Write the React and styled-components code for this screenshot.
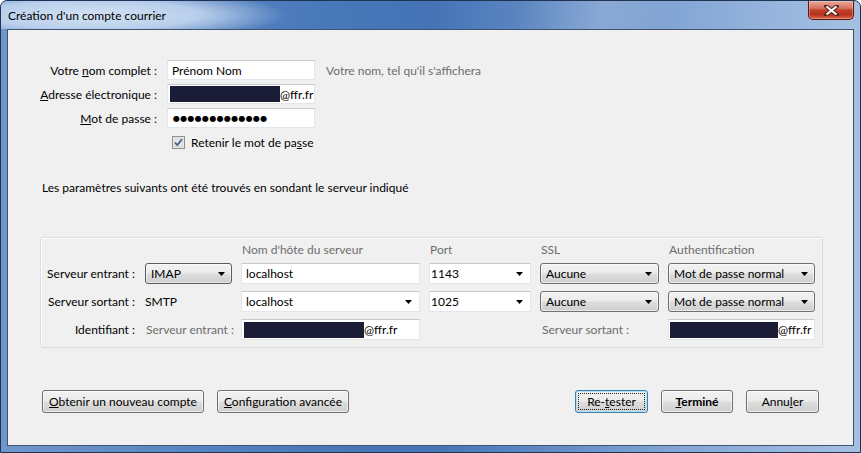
import React from 'react';
import styled, { createGlobalStyle } from 'styled-components';

const GlobalStyle = createGlobalStyle`
  html, body {
    margin: 0;
    padding: 0;
    background: #ffffff;
  }
  body {
    font-family: "Segoe UI", Lato, "Noto Sans", sans-serif;
    font-size: 12px;
    color: #000000;
  }
`;

const Window = styled.div`
  width: 861px;
  height: 453px;
  box-sizing: border-box;
  border: 1px solid #1f3352;
  border-radius: 7px 7px 0 0;
  background: linear-gradient(90deg, #6f97cb 0%, #4b7abb 35%, #4473b6 50%, #86a8d6 80%, #a6c0e3 100%);
  display: flex;
  flex-direction: column;
  overflow: hidden;
`;

const TitleBar = styled.div`
  height: 28px;
  flex: none;
  display: flex;
  justify-content: space-between;
  align-items: flex-start;
  padding: 0 6px 0 7px;
  background:
    radial-gradient(ellipse 190px 26px at 95px 14px, rgba(214, 228, 245, 0.98) 0%, rgba(200, 218, 242, 0.85) 55%, rgba(200, 218, 242, 0) 100%),
    linear-gradient(100deg, rgba(255, 255, 255, 0) 60%, rgba(255, 255, 255, 0.18) 70%, rgba(255, 255, 255, 0) 78%);
`;

const Title = styled.span`
  line-height: 29px;
  color: #000;
`;

const CloseButton = styled.div`
  width: 46px;
  height: 19px;
  box-sizing: border-box;
  border: 1px solid #5a1a10;
  border-top: none;
  border-radius: 0 0 5px 5px;
  background: linear-gradient(#e9a99c 0%, #d7735f 40%, #c1402a 50%, #b8301c 75%, #d8694c 100%);
  box-shadow: inset 0 0 0 1px rgba(255, 220, 210, 0.35);
  display: flex;
  align-items: center;
  justify-content: center;
`;

const Frame = styled.div`
  flex: 1;
  display: flex;
  padding: 0 6px 6px;
`;

const Content = styled.div`
  flex: 1;
  min-width: 0;
  border: 1px solid #3d536f;
  background: #f0f0f0;
  padding: 30px 34px 0 32px;
  display: flex;
  flex-direction: column;
`;

const TopForm = styled.div`
  display: grid;
  grid-template-columns: 117px 148px 1fr;
  grid-auto-rows: 20px;
  column-gap: 10px;
  row-gap: 4px;
  align-items: center;
`;

const Label = styled.label`
  text-align: right;
  white-space: nowrap;
  padding-right: ${(p) => p.$pr || 0}px;
`;

const TextBox = styled.div`
  height: ${(p) => p.$h || 20}px;
  box-sizing: border-box;
  border: 1px solid #e2e6eb;
  border-top-color: #c6cace;
  background: #ffffff;
  padding: 0 ${(p) => p.$pl ?? 4}px;
  display: flex;
  align-items: center;
  white-space: nowrap;
  overflow: hidden;
  grid-column: ${(p) => p.$col || 'auto'};
`;

const Combo = styled(TextBox)`
  justify-content: space-between;
  padding-right: 7px;
`;

const Hint = styled.span`
  color: #6d6d6d;
  margin-left: 1px;
  white-space: nowrap;
`;

const Redacted = styled.span`
  display: inline-block;
  width: ${(p) => p.$w}px;
  height: 16px;
  background: #1b1c36;
  flex: none;
`;

const Dots = styled.span`
  font-family: "DejaVu Sans", sans-serif;
  font-size: 8px;
  letter-spacing: 0.3px;
  padding-left: 1px;
`;

const CheckRow = styled.label`
  grid-column: 2 / span 2;
  display: flex;
  align-items: center;
  gap: 6px;
  padding-left: 5px;
`;

const Info = styled.p`
  margin: 28px 0 0;
  line-height: 15px;
  padding-left: 2px;
`;

const Group = styled.div`
  margin-top: 42px;
  align-self: flex-start;
  flex: none;
  width: 783px;
  box-sizing: border-box;
  border: 1px solid #d5dfe5;
  border-radius: 3px;
  box-shadow: inset 1px 1px 0 #ffffff;
  padding: 4px 0 7px;
  display: grid;
  grid-template-columns: 95px 87px 179px 102px 119px 147px;
  grid-template-rows: 14px 21px 21px 21px;
  column-gap: 9px;
  row-gap: 7px;
  align-items: center;
`;

const ColHead = styled.span`
  grid-column: ${(p) => p.$col};
  color: #6d6d6d;
  padding-left: 1px;
  white-space: nowrap;
`;

const Muted = styled.span`
  grid-column: ${(p) => p.$col};
  color: #6d6d6d;
  padding-left: ${(p) => p.$pl || 1}px;
  white-space: nowrap;
`;

const Plain = styled.span`
  grid-column: ${(p) => p.$col};
  white-space: nowrap;
`;

const Select = styled.div`
  grid-column: ${(p) => p.$col};
  height: 21px;
  box-sizing: border-box;
  border: 1px solid ${(p) => (p.$dark ? '#5b5b5b' : '#707070')};
  border-radius: 3px;
  background: linear-gradient(#f2f2f2 0%, #ebebeb 48%, #dddddd 52%, #cfcfcf 100%);
  box-shadow: inset 0 0 0 1px rgba(255, 255, 255, 0.55);
  display: flex;
  align-items: center;
  justify-content: space-between;
  padding: 0 6px 0 5px;
  white-space: nowrap;
`;

const ButtonRow = styled.div`
  margin-top: 42px;
  display: flex;
  gap: 13px;
  padding-left: 2px;
`;

const Spacer = styled.div`
  flex: 1;
`;

const Button = styled.button`
  position: relative;
  flex: none;
  width: ${(p) => p.$w}px;
  height: 23px;
  box-sizing: border-box;
  padding: 0;
  border: 1px solid ${(p) => (p.$focus ? '#3c7fb1' : '#707070')};
  border-radius: 3px;
  background: linear-gradient(#f2f2f2 0%, #ebebeb 48%, #dddddd 52%, #cfcfcf 100%);
  box-shadow: inset 0 0 0 1px ${(p) => (p.$focus ? '#b3dff7' : 'rgba(255, 255, 255, 0.6)')};
  font-family: inherit;
  font-size: 12px;
  font-weight: ${(p) => (p.$bold ? 700 : 400)};
  color: #000;
  white-space: nowrap;

  &::after {
    content: '';
    display: ${(p) => (p.$focus ? 'block' : 'none')};
    position: absolute;
    inset: 2px;
    border: 1px dotted #222;
  }
`;

const Arrow = () => (
  <svg width="7" height="4" viewBox="0 0 7 4">
    <polygon points="0,0 7,0 3.5,4" fill="#000" />
  </svg>
);

const CloseGlyph = () => (
  <svg width="15" height="11" viewBox="0 0 15 11">
    <path d="M2 1 L13 10 M13 1 L2 10" stroke="#5a2a22" strokeWidth="4" strokeLinecap="square" />
    <path d="M2.5 1.5 L12.5 9.5 M12.5 1.5 L2.5 9.5" stroke="#ffffff" strokeWidth="2" />
  </svg>
);

const CheckBox = () => (
  <svg width="13" height="13" viewBox="0 0 13 13">
    <rect x="0.5" y="0.5" width="12" height="12" fill="#f4f4f4" stroke="#8e8f8f" />
    <rect x="2" y="2" width="9" height="9" fill="#e6e6e6" stroke="#c4c4c4" strokeWidth="0.6" />
    <path d="M3 6.5 L5.3 9 L10 3.2" fill="none" stroke="#4a5f8a" strokeWidth="1.8" />
  </svg>
);

const Email = ({ w }) => (
  <>
    <Redacted $w={w} />
    <span>@ffr.fr</span>
  </>
);

const App = () => (
  <>
    <GlobalStyle />
    <Window>
      <TitleBar>
        <Title>Création d'un compte courrier</Title>
        <CloseButton>
          <CloseGlyph />
        </CloseButton>
      </TitleBar>
      <Frame>
        <Content>
          <TopForm>
            <Label>Votre <u>n</u>om complet :</Label>
            <TextBox>Prénom Nom</TextBox>
            <Hint>Votre nom, tel qu'il s'affichera</Hint>

            <Label><u>A</u>dresse électronique :</Label>
            <TextBox $pl={2}>
              <Email w={110} />
            </TextBox>
            <span />

            <Label><u>M</u>ot de passe :</Label>
            <TextBox>
              <Dots>●●●●●●●●●●●●●</Dots>
            </TextBox>
            <span />

            <CheckRow>
              <CheckBox />
              <span>Retenir le mot de pa<u>s</u>se</span>
            </CheckRow>
          </TopForm>

          <Info>Les paramètres suivants ont été trouvés en sondant le serveur indiqué</Info>

          <Group>
            <ColHead $col={3}>Nom d'hôte du serveur</ColHead>
            <ColHead $col={4}>Port</ColHead>
            <ColHead $col={5}>SSL</ColHead>
            <ColHead $col={6}>Authentification</ColHead>

            <Label $pr={1}>Serveur entrant :</Label>
            <Select $col={2} $dark>
              <span>IMAP</span>
              <Arrow />
            </Select>
            <TextBox $h={21}>localhost</TextBox>
            <Combo $h={21} $pl={1}>
              <span>1143</span>
              <Arrow />
            </Combo>
            <Select $col={5}>
              <span>Aucune</span>
              <Arrow />
            </Select>
            <Select $col={6}>
              <span>Mot de passe normal</span>
              <Arrow />
            </Select>

            <Label $pr={1}>Serveur sortant :</Label>
            <Plain $col={2}>SMTP</Plain>
            <Combo $h={21}>
              <span>localhost</span>
              <Arrow />
            </Combo>
            <Combo $h={21} $pl={1}>
              <span>1025</span>
              <Arrow />
            </Combo>
            <Select $col={5}>
              <span>Aucune</span>
              <Arrow />
            </Select>
            <Select $col={6}>
              <span>Mot de passe normal</span>
              <Arrow />
            </Select>

            <Label $pr={1}>Identifiant :</Label>
            <Muted $col={2}>Serveur entrant :</Muted>
            <TextBox $h={21} $pl={2} $col={3}>
              <Email w={120} />
            </TextBox>
            <Muted $col={5} $pl={2}>Serveur sortant :</Muted>
            <TextBox $h={21} $pl={1} $col={6}>
              <Email w={108} />
            </TextBox>
          </Group>

          <ButtonRow>
            <Button $w={162}><u>O</u>btenir un nouveau compte</Button>
            <Button $w={132}><u>C</u>onfiguration avancée</Button>
            <Spacer />
            <Button $w={73} $focus>Re-<u>t</u>ester</Button>
            <Button $w={72} $bold><u>T</u>erminé</Button>
            <Button $w={73}>Annu<u>l</u>er</Button>
          </ButtonRow>
        </Content>
      </Frame>
    </Window>
  </>
);

export default App;
